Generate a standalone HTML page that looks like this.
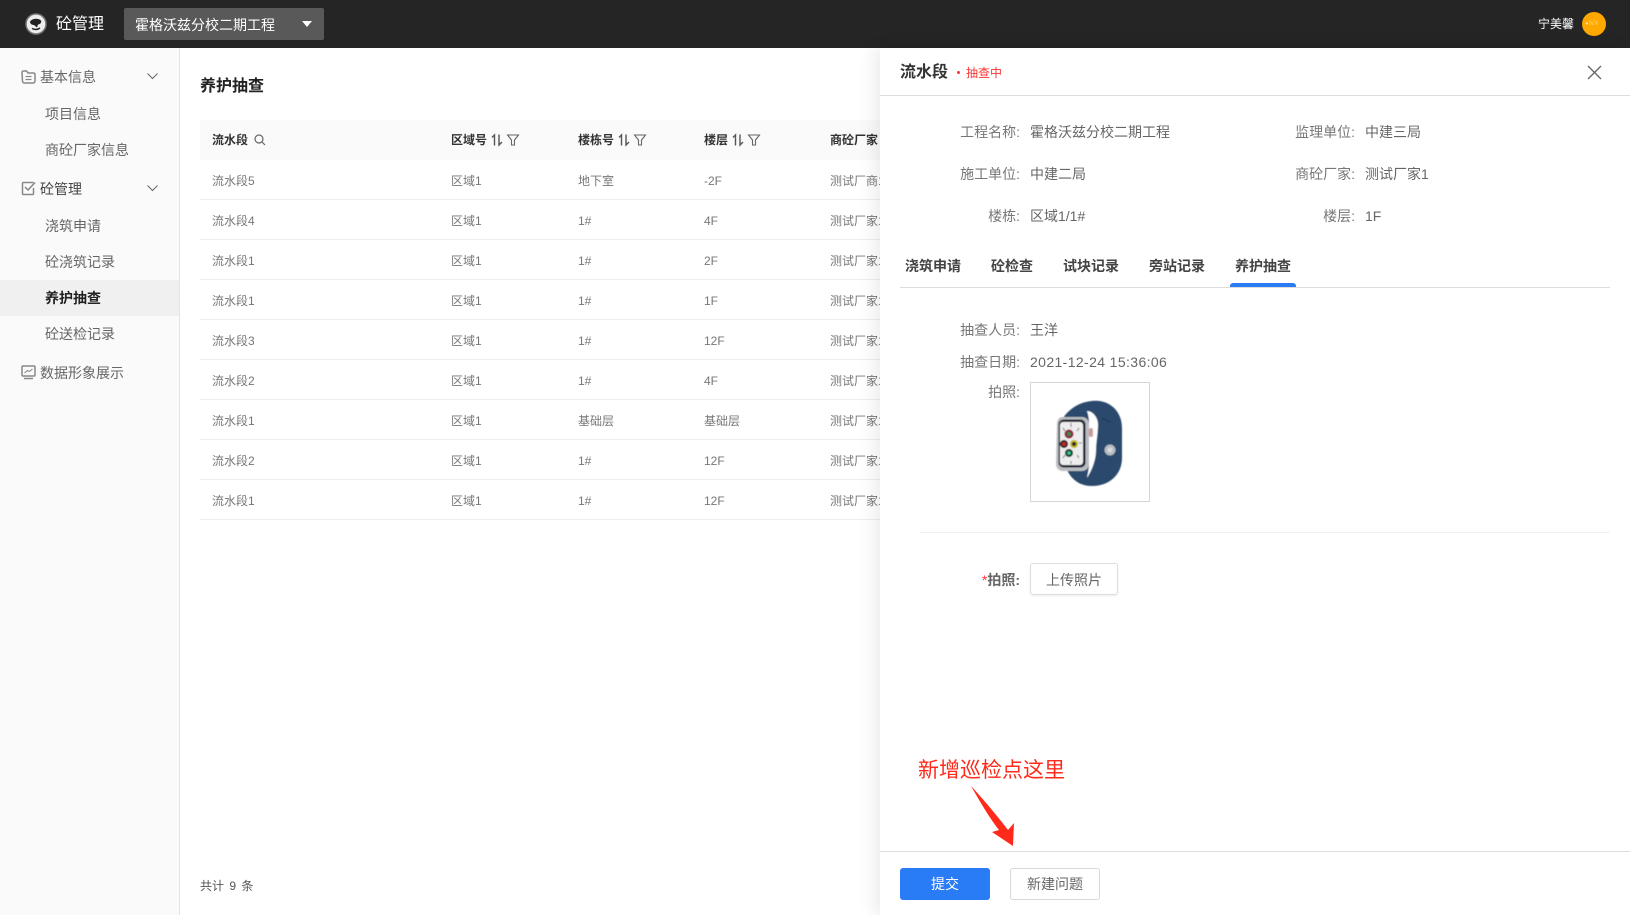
<!DOCTYPE html>
<html lang="zh"><head><meta charset="utf-8"><title>养护抽查</title>
<style>
*{box-sizing:border-box}
html,body{margin:0;padding:0;width:1630px;height:915px;overflow:hidden;background:#fff;font-family:"Liberation Sans","Noto Sans CJK SC",sans-serif;color:#666}
.a{position:absolute;white-space:nowrap;line-height:20px;height:20px}
.box{position:absolute}
.m{font-size:14px;color:#666}
.th{font-size:12px;font-weight:700;color:#333}
.td{font-size:12px;color:#777}
.l{font-size:14px;color:#777;text-align:right}
.v{font-size:14px;color:#666}
.t{font-size:14px;font-weight:700;color:#444}
svg{position:absolute;overflow:visible}
</style></head><body>
<div class="box" style="left:0;top:0;width:1630px;height:48px;background:#252525"></div>
<svg style="left:24px;top:12px" width="24" height="24" viewBox="0 0 24 24"><circle cx="12" cy="12" r="10" fill="#eee" stroke="#777" stroke-width="1.5"/><path d="M6 9.500c2-3 8-4 11-1 1 2-1 4-3 4l-1 3-3-2.500C8 13 6 12 6 9.500z" fill="#222"/><path d="M8 16.500c3 1.500 6 1 8-.5" stroke="#222" stroke-width="1.500" fill="none"/></svg>
<div class="a" style="left:56px;top:15px;font-size:16px;color:#fff">砼管理</div>
<div class="box" style="left:124px;top:8px;width:200px;height:32px;background:#595959;border-radius:2px"></div>
<div class="a" style="left:135px;top:15px;font-size:14px;color:#fff">霍格沃兹分校二期工程</div>
<svg style="left:302px;top:21px" width="11" height="6"><path d="M0 0h10L5 6z" fill="#fff"/></svg>
<div class="a" style="left:1538px;top:14px;font-size:12px;color:#fff">宁美馨</div>
<div class="box" style="left:1582px;top:12px;width:24px;height:24px;border-radius:50%;background:#ffa800"></div>
<div class="a" style="left:1585px;top:14px;font-size:6px;color:#ffd98a">●IVX</div>

<div class="box" style="left:0;top:48px;width:180px;height:867px;background:#fafafa;border-right:1px solid #e3e3e3"></div>
<div class="box" style="left:0;top:280px;width:179px;height:36px;background:#f0f0f0"></div>
<svg style="left:21px;top:70px" width="15" height="14" viewBox="0 0 15 14"><path d="M1 2.500a1.500 1.500 0 0 1 1.500-1.500h3l1.500 2h5.500a1.500 1.500 0 0 1 1.500 1.500v6.500a2 2 0 0 1-2 2h-8.500a2 2 0 0 1-2-2z" fill="none" stroke="#888" stroke-width="1.500"/><path d="M4.500 6.500h6M4.500 9.500h6" stroke="#888" stroke-width="1.300"/></svg>
<div class="a m" style="left:40px;top:67px">基本信息</div>
<svg style="left:147px;top:73px" width="11" height="7"><path d="M.5.500l5 5 5-5" fill="none" stroke="#666"/></svg>
<div class="a m" style="left:45px;top:104px">项目信息</div>
<div class="a m" style="left:45px;top:140px">商砼厂家信息</div>
<svg style="left:21px;top:181px" width="15" height="15" viewBox="0 0 15 15"><path d="M12.500 7v5.500a1 1 0 0 1-1 1h-9a1 1 0 0 1-1-1v-10a1 1 0 0 1 1-1h10" fill="none" stroke="#888" stroke-width="1.500"/><path d="M4 6l3 3 7-7.500" fill="none" stroke="#888" stroke-width="1.500"/></svg>
<div class="a m" style="left:40px;top:179px;color:#444">砼管理</div>
<svg style="left:147px;top:185px" width="11" height="7"><path d="M.5.500l5 5 5-5" fill="none" stroke="#666"/></svg>
<div class="a m" style="left:45px;top:216px">浇筑申请</div>
<div class="a m" style="left:45px;top:252px">砼浇筑记录</div>
<div class="a m" style="left:45px;top:288px;color:#222;font-weight:700">养护抽查</div>
<div class="a m" style="left:45px;top:324px">砼送检记录</div>
<svg style="left:21px;top:365px" width="15" height="15" viewBox="0 0 15 15"><rect x="1" y="1" width="13" height="10" rx="1" fill="none" stroke="#888" stroke-width="1.500"/><path d="M3.500 8l3-2.500 2 1 3-2.500" fill="none" stroke="#888"/><path d="M3 13.500h9" stroke="#888" stroke-width="1.500"/></svg>
<div class="a m" style="left:40px;top:363px">数据形象展示</div>

<div class="a" style="left:200px;top:77px;font-size:16px;font-weight:700;color:#222">养护抽查</div>
<div class="box" style="left:200px;top:120px;width:690px;height:40px;background:#fafafa"></div>
<div class="a th" style="left:212px;top:130px">流水段</div>
<svg style="left:254px;top:134px" width="12" height="12"><circle cx="5" cy="5" r="4" fill="none" stroke="#666" stroke-width="1.200"/><path d="M8 8l3 3" stroke="#666" stroke-width="1.200"/></svg>
<div class="a th" style="left:451px;top:130px">区域号</div>
<div class="a th" style="left:578px;top:130px">楼栋号</div>
<div class="a th" style="left:704px;top:130px">楼层</div>
<div class="a th" style="left:830px;top:130px">商砼厂家</div>
<svg style="left:491px;top:134px" width="12" height="12"><path d="M3.500 11.500V1L1 3.500M8 .5V11l3-3" fill="none" stroke="#555" stroke-width="1.400"/></svg>
<svg style="left:507px;top:134px" width="12" height="12"><path d="M.5 1h11L7.500 6v5h-3V6z" fill="none" stroke="#666" stroke-width="1.100"/></svg>
<svg style="left:618px;top:134px" width="12" height="12"><path d="M3.500 11.500V1L1 3.500M8 .5V11l3-3" fill="none" stroke="#555" stroke-width="1.400"/></svg>
<svg style="left:634px;top:134px" width="12" height="12"><path d="M.5 1h11L7.500 6v5h-3V6z" fill="none" stroke="#666" stroke-width="1.100"/></svg>
<svg style="left:732px;top:134px" width="12" height="12"><path d="M3.500 11.500V1L1 3.500M8 .5V11l3-3" fill="none" stroke="#555" stroke-width="1.400"/></svg>
<svg style="left:748px;top:134px" width="12" height="12"><path d="M.5 1h11L7.500 6v5h-3V6z" fill="none" stroke="#666" stroke-width="1.100"/></svg>

<div class="a td" style="left:212px;top:171px">流水段5</div><div class="a td" style="left:451px;top:171px">区域1</div><div class="a td" style="left:578px;top:171px">地下室</div><div class="a td" style="left:704px;top:171px">-2F</div><div class="a td" style="left:830px;top:171px">测试厂商1</div>
<div class="box" style="left:200px;top:199px;width:690px;height:1px;background:#eee"></div>
<div class="a td" style="left:212px;top:211px">流水段4</div><div class="a td" style="left:451px;top:211px">区域1</div><div class="a td" style="left:578px;top:211px">1#</div><div class="a td" style="left:704px;top:211px">4F</div><div class="a td" style="left:830px;top:211px">测试厂家1</div>
<div class="box" style="left:200px;top:239px;width:690px;height:1px;background:#eee"></div>
<div class="a td" style="left:212px;top:251px">流水段1</div><div class="a td" style="left:451px;top:251px">区域1</div><div class="a td" style="left:578px;top:251px">1#</div><div class="a td" style="left:704px;top:251px">2F</div><div class="a td" style="left:830px;top:251px">测试厂家1</div>
<div class="box" style="left:200px;top:279px;width:690px;height:1px;background:#eee"></div>
<div class="a td" style="left:212px;top:291px">流水段1</div><div class="a td" style="left:451px;top:291px">区域1</div><div class="a td" style="left:578px;top:291px">1#</div><div class="a td" style="left:704px;top:291px">1F</div><div class="a td" style="left:830px;top:291px">测试厂家1</div>
<div class="box" style="left:200px;top:319px;width:690px;height:1px;background:#eee"></div>
<div class="a td" style="left:212px;top:331px">流水段3</div><div class="a td" style="left:451px;top:331px">区域1</div><div class="a td" style="left:578px;top:331px">1#</div><div class="a td" style="left:704px;top:331px">12F</div><div class="a td" style="left:830px;top:331px">测试厂家1</div>
<div class="box" style="left:200px;top:359px;width:690px;height:1px;background:#eee"></div>
<div class="a td" style="left:212px;top:371px">流水段2</div><div class="a td" style="left:451px;top:371px">区域1</div><div class="a td" style="left:578px;top:371px">1#</div><div class="a td" style="left:704px;top:371px">4F</div><div class="a td" style="left:830px;top:371px">测试厂家1</div>
<div class="box" style="left:200px;top:399px;width:690px;height:1px;background:#eee"></div>
<div class="a td" style="left:212px;top:411px">流水段1</div><div class="a td" style="left:451px;top:411px">区域1</div><div class="a td" style="left:578px;top:411px">基础层</div><div class="a td" style="left:704px;top:411px">基础层</div><div class="a td" style="left:830px;top:411px">测试厂家1</div>
<div class="box" style="left:200px;top:439px;width:690px;height:1px;background:#eee"></div>
<div class="a td" style="left:212px;top:451px">流水段2</div><div class="a td" style="left:451px;top:451px">区域1</div><div class="a td" style="left:578px;top:451px">1#</div><div class="a td" style="left:704px;top:451px">12F</div><div class="a td" style="left:830px;top:451px">测试厂家1</div>
<div class="box" style="left:200px;top:479px;width:690px;height:1px;background:#eee"></div>
<div class="a td" style="left:212px;top:491px">流水段1</div><div class="a td" style="left:451px;top:491px">区域1</div><div class="a td" style="left:578px;top:491px">1#</div><div class="a td" style="left:704px;top:491px">12F</div><div class="a td" style="left:830px;top:491px">测试厂家1</div>
<div class="box" style="left:200px;top:519px;width:690px;height:1px;background:#eee"></div>
<div class="a" style="left:200px;top:876px;font-size:12px;color:#555;word-spacing:2px">共计 9 条</div>

<div class="box" style="left:880px;top:48px;width:750px;height:867px;background:#fff;box-shadow:-6px 0 16px rgba(0,0,0,.08)"></div>
<div class="a" style="left:900px;top:63px;font-size:16px;font-weight:700;color:#333">流水段</div>
<div class="box" style="left:957px;top:71px;width:3px;height:3px;border-radius:50%;background:#f33"></div>
<div class="a" style="left:966px;top:63px;font-size:12px;color:#f33">抽查中</div>
<svg style="left:1587px;top:65px" width="15" height="15"><path d="M1 1l13 13M14 1L1 14" stroke="#666" stroke-width="1.300"/></svg>
<div class="box" style="left:880px;top:95px;width:750px;height:1px;background:#ddd"></div>

<div class="a l" style="left:920px;top:122px;width:100px">工程名称:</div><div class="a v" style="left:1030px;top:122px">霍格沃兹分校二期工程</div>
<div class="a l" style="left:1255px;top:122px;width:100px">监理单位:</div><div class="a v" style="left:1365px;top:122px">中建三局</div>
<div class="a l" style="left:920px;top:164px;width:100px">施工单位:</div><div class="a v" style="left:1030px;top:164px">中建二局</div>
<div class="a l" style="left:1255px;top:164px;width:100px">商砼厂家:</div><div class="a v" style="left:1365px;top:164px">测试厂家1</div>
<div class="a l" style="left:920px;top:206px;width:100px">楼栋:</div><div class="a v" style="left:1030px;top:206px">区域1/1#</div>
<div class="a l" style="left:1255px;top:206px;width:100px">楼层:</div><div class="a v" style="left:1365px;top:206px">1F</div>

<div class="a t" style="left:905px;top:256px">浇筑申请</div>
<div class="a t" style="left:991px;top:256px">砼检查</div>
<div class="a t" style="left:1063px;top:256px">试块记录</div>
<div class="a t" style="left:1149px;top:256px">旁站记录</div>
<div class="a t" style="left:1235px;top:256px">养护抽查</div>
<div class="box" style="left:900px;top:287px;width:710px;height:1px;background:#ddd"></div>
<div class="box" style="left:1230px;top:283px;width:66px;height:4px;background:#2a7bf6;border-radius:3px 3px 0 0"></div>

<div class="a l" style="left:920px;top:320px;width:100px">抽查人员:</div><div class="a v" style="left:1030px;top:320px">王洋</div>
<div class="a l" style="left:920px;top:352px;width:100px">抽查日期:</div><div class="a v" style="left:1030px;top:352px;letter-spacing:.38px">2021-12-24 15:36:06</div>
<div class="a l" style="left:920px;top:382px;width:100px">拍照:</div>
<div class="box" style="left:1030px;top:382px;width:120px;height:120px;border:1px solid #d5d5d5;background:#fff"></div>
<svg style="left:1030px;top:382px" width="120" height="120" viewBox="0 0 120 120">
<defs><filter id="b" x="-10%" y="-10%" width="120%" height="120%"><feGaussianBlur stdDeviation=".45"/></filter></defs>
<g filter="url(#b)">
<path d="M33 36C40 26 50 20 62 19 78 17 92 28 92 46L92 76C92 92 80 104 62 104 50 104 42 98 37 88Z" fill="#2c4a6c"/>
<path d="M57 29C63 29 68 36 68 42 68 52 66 60 66 68 66 78 62 88 57 96 58 90 59 88 59 80L59 40C59 36 58 32 57 29Z" fill="#fff"/>
<path d="M72 36l8 4" stroke="#1f3852" stroke-width="1.500" fill="none"/>
<path d="M27 42C27 38 29 35 33 35H52C56 35 59 38 59 42V82C59 86 56 89 52 89H33C29 89 26 86 26 82Z" fill="#b9bcc0"/>
<rect x="28.500" y="37.500" width="27" height="48" rx="5" fill="#1b2230"/>
<rect x="30" y="40" width="23" height="43" rx="3" fill="#ededed"/>
<path d="M41 41v4M41 79v3M31 61h3M49 61h3M33 46l2 3M49 46l-2 3M33 76l2-3M49 76l-2-3" stroke="#555" stroke-width=".8"/>
<circle cx="39" cy="52" r="4.500" fill="#8a1c3c"/><circle cx="39" cy="52" r="2.200" fill="#3b8a4a"/>
<circle cx="34" cy="62" r="4" fill="#222"/><circle cx="34" cy="62" r="2" fill="#c22"/>
<circle cx="44" cy="62" r="4" fill="#c5b51a"/><circle cx="44" cy="62" r="2" fill="#223"/>
<circle cx="39" cy="71" r="4" fill="#1d3a2b"/><circle cx="39" cy="71" r="1.800" fill="#3c9"/>
<rect x="59" y="46" width="4" height="9" rx="2" fill="#c99"/>
<circle cx="80" cy="68" r="5.500" fill="#b8bcc2"/><circle cx="80" cy="68" r="2.500" fill="#d8dbe0"/>
</g>
</svg>
<div class="box" style="left:920px;top:532px;width:690px;height:1px;background:#f0f0f0"></div>
<div class="a l" style="left:920px;top:570px;width:100px;font-weight:700;color:#666"><span style="color:#f33;font-weight:400">*</span>拍照:</div>
<div class="box" style="left:1030px;top:563px;width:88px;height:32px;border:1px solid #ddd;border-radius:3px;box-shadow:0 1px 2px rgba(0,0,0,.08)"></div>
<div class="a" style="left:1046px;top:570px;font-size:14px;color:#666">上传照片</div>

<div class="a" style="left:918px;top:758px;height:26px;line-height:26px;font-size:21px;color:#ff2a1a">新增巡检点这里</div>
<svg style="left:960px;top:780px" width="60" height="70"><path d="M11 6C18 18 28 36 39 50L32 52 53 66 54 43 48 50C36 34 22 18 11 6z" fill="#ff2a1a"/></svg>

<div class="box" style="left:880px;top:851px;width:750px;height:1px;background:#ddd"></div>
<div class="box" style="left:900px;top:868px;width:90px;height:32px;background:#2a7bf6;border-radius:3px"></div>
<div class="a" style="left:931px;top:874px;font-size:14px;color:#fff">提交</div>
<div class="box" style="left:1010px;top:868px;width:90px;height:32px;border:1px solid #d9d9d9;border-radius:3px"></div>
<div class="a" style="left:1027px;top:874px;font-size:14px;color:#666">新建问题</div>
</body></html>
